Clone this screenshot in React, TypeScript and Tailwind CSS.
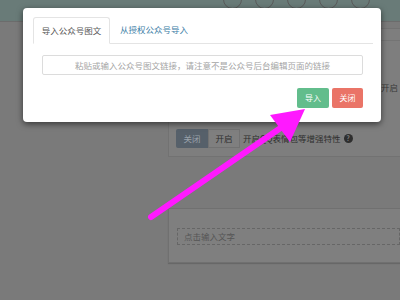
import React from "react";

const font = { fontFamily: '"Noto Sans CJK SC", "Noto Sans", sans-serif' };

export default function App() {
  return (
    <div
      className="relative w-[400px] h-[300px] overflow-hidden bg-[#7a7a7a] flex flex-col"
      style={font}
    >
      {/* header */}
      <div className="h-[22px] shrink-0 bg-[#697b78] flex items-start pl-[223px] gap-[13px] border-b border-[#6c6c6c]">
        {[0, 1, 2, 3, 4].map((i) => (
          <div
            key={i}
            className="mt-[-10px] w-[19px] h-[19px] rounded-full border-[1.5px] border-[#5a5a5a]"
          />
        ))}
      </div>

      {/* body */}
      <div className="flex flex-1">
        <div className="w-[168px] shrink-0" />
        <div className="flex-1 flex flex-col">
          <div className="mt-[6px] h-[129px] bg-[#7e7e7e] border border-[#727272] border-r-0 flex flex-col">
            <div className="h-[12px] border-b border-[#747474]" />
            <div className="mt-[40px] flex justify-end pr-[2px] text-[8.5px] text-[#3a3a3a]">开启</div>
            <div className="mt-auto mb-[8px] ml-[7px] flex items-center text-[8.5px]">
              <div className="w-[32px] h-[19px] bg-[#56606a] text-[#9aa2aa] flex items-center justify-center rounded-l-[2px]">
                关闭
              </div>
              <div className="w-[32px] h-[19px] bg-[#7f7f7f] border border-[#727272] text-[#2e2e2e] flex items-center justify-center">
                开启
              </div>
              <div className="ml-[3px] text-[#2e2e2e] whitespace-nowrap">开启QQ表情包等增强特性</div>
              <div className="ml-[3px] w-[9px] h-[9px] rounded-full bg-[#2e2e2e] text-[#7e7e7e] text-[7px] font-bold flex items-center justify-center leading-none">
                ?
              </div>
            </div>
          </div>
          <div className="mt-[51px] h-[55px] bg-[#7f7f7f] border border-[#707070] border-r-0 shadow-[0_1px_1px_rgba(0,0,0,0.15)]">
            <div className="mt-[19px] ml-[8px] h-[17px] border border-dashed border-[#666] flex items-center pl-[6px] text-[8.5px] text-[#555]">
              点击输入文字
            </div>
          </div>
        </div>
      </div>

      {/* modal */}
      <div className="absolute left-[23px] top-[8px] w-[358px] h-[114px] bg-white rounded-[4px] shadow-[0_2px_6px_rgba(0,0,0,0.55)] pt-[9px] pl-[10px] pr-[8px]">
        <div className="flex items-end border-b border-[#e4e4e4] h-[27px]">
          <div className="w-[77px] h-[27px] border border-[#e4e4e4] border-b-white -mb-[1px] rounded-t-[3px] bg-white flex items-center justify-center text-[8.5px] text-[#555]">
            导入公众号图文
          </div>
          <div className="ml-[10px] h-[27px] flex items-center text-[8.5px] text-[#3d7ea6]">
            从授权公众号导入
          </div>
        </div>
        <div className="mt-[11px] ml-[9px] mr-[10px] h-[20px] border border-[#dcdcdc] rounded-[2px] flex items-center justify-center text-[8.5px] text-[#a5a5a5] whitespace-nowrap">
          粘贴或输入公众号图文链接，请注意不是公众号后台编辑页面的链接
        </div>
        <div className="mt-[13px] mr-[10px] flex justify-end gap-[3px]">
          <div className="w-[32px] h-[20px] rounded-[2px] bg-[#62bd8c] text-white text-[8px] flex items-center justify-center">
            导入
          </div>
          <div className="w-[31px] h-[20px] rounded-[2px] bg-[#ea7467] text-white text-[8px] flex items-center justify-center">
            关闭
          </div>
        </div>
      </div>

      {/* arrow annotation */}
      <svg className="absolute left-0 top-0" width="400" height="300" viewBox="0 0 400 300">
        <line x1="151" y1="217" x2="282" y2="127" stroke="#ff19ff" strokeWidth="6" strokeLinecap="round" />
        <polygon points="305,109 270,115 290,142" fill="#ff19ff" />
      </svg>
    </div>
  );
}
